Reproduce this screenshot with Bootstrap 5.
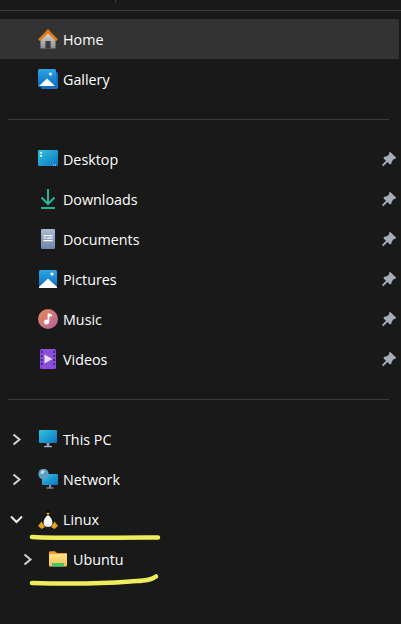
<!DOCTYPE html>
<html lang="en">
<head>
<meta charset="utf-8">
<title>Explorer sidebar</title>
<link href="https://cdn.jsdelivr.net/npm/bootstrap@5.3.0/dist/css/bootstrap.min.css" rel="stylesheet">
<style>
html,body{height:100%;margin:0;background:#191919;overflow:hidden}
body{font-family:"Open Sans","Noto Sans","Liberation Sans",sans-serif;font-size:14.3px;color:#fff;position:relative}
.top-strip{height:10px;position:relative}
.top-tick{position:absolute;left:115px;top:0;width:1px;height:3px;background:#3a3a3a}
.top-line{height:1px;background:#3d3d3d}
.tree-group{padding-top:8px}
.tree-row{height:40px;padding-left:38px;padding-right:12px;position:relative}
.tree-row.active-row{background:#333;margin-right:2px;padding-right:10px}
.tree-row.nested{padding-left:48px}
.tree-row svg.ico{width:20px;height:20px;flex:none;display:block}
.tree-row .lbl{margin-left:5px;line-height:1;padding-top:2px}
.chev{position:absolute;left:11px;top:14px;width:11px;height:13px}
.chev-open{left:10px;width:13px;top:15px;height:11px}
.nested .chev{left:22px}
.pin{width:16px;height:16px;margin-left:auto;flex:none;margin-right:-8px}
.sep{height:1px;background:#3a3a3a;margin:20px 12px 19px 8px}
.marker{position:absolute;left:0;top:0;pointer-events:none}
</style>
</head>
<body>
<svg width="0" height="0" class="d-block position-absolute">
<defs>
<linearGradient id="gBlue" x1="0" y1="0" x2="0" y2="1"><stop offset="0" stop-color="#2aa7e6"/><stop offset="1" stop-color="#0c6cc0"/></linearGradient>
<linearGradient id="gScreen" x1="0" y1="0" x2="1" y2="1"><stop offset="0" stop-color="#2fc7dc"/><stop offset="1" stop-color="#0f72c4"/></linearGradient>
<linearGradient id="gHome" x1="0" y1="0" x2="0" y2="1"><stop offset="0" stop-color="#d8d8d8"/><stop offset="1" stop-color="#8f8f8f"/></linearGradient>
<linearGradient id="gDoc" x1="0" y1="0" x2="0" y2="1"><stop offset="0" stop-color="#a9bcd6"/><stop offset="1" stop-color="#6f86a6"/></linearGradient>
<linearGradient id="gMusic" x1="0" y1="0" x2="1" y2="1"><stop offset="0" stop-color="#ec8a50"/><stop offset="1" stop-color="#b45fa6"/></linearGradient>
<linearGradient id="gFolder" x1="0" y1="0" x2="0" y2="1"><stop offset="0" stop-color="#ffe08a"/><stop offset="1" stop-color="#f6c04e"/></linearGradient>
<symbol id="chevR" viewBox="0 0 11 13"><path d="M2.5 1.5 8.5 6.5 2.5 11.5" fill="none" stroke="#d4d4d4" stroke-width="2"/></symbol>
<symbol id="chevD" viewBox="0 0 13 11"><path d="M1 2.5 6.5 8 12 2.5" fill="none" stroke="#efefef" stroke-width="2"/></symbol>
<symbol id="pinI" viewBox="0 0 16 16"><path d="M9 .8 15.2 6.8 13.6 8.2 12.6 8 10.6 11 10.4 12.8 9 13.6 6.4 11 2.4 15.2 1 14 5 9.8 2.4 7.2 3.2 5.8 5.2 5.6 8.2 3.6 7.8 2.4Z" fill="#a5adb7"/></symbol>
<symbol id="picI" viewBox="0 0 20 20"><rect x="1" y="1" width="18" height="18" rx="1.5" fill="url(#gBlue)"/><circle cx="14" cy="5" r="1.6" fill="#fff"/><path d="M1 18 10 9.5 19 18v1H1Z" fill="#fff"/></symbol>
</defs>
</svg>

<div class="top-strip"><div class="top-tick"></div></div>
<div class="top-line"></div>

<div class="tree-group">
  <div class="tree-row active-row d-flex align-items-center">
    <svg class="ico" viewBox="0 0 20 20"><path d="M2.5 10 10 3.5 17.500 10V19.500H2.500Z" fill="url(#gHome)"/><rect x="7.400" y="12" width="5.200" height="7.500" fill="#3a3a3a"/><path d="M0 10.500 10 0 20 10.500 18 12 10 4.500 2 12Z" fill="#e8780f"/></svg>
    <span class="lbl">Home</span>
  </div>
  <div class="tree-row d-flex align-items-center">
    <svg class="ico" viewBox="0 0 20 20"><rect x="3" y="3" width="17" height="17" rx="1.5" fill="#1a6fc0"/><rect x="0" y="0" width="18" height="18" rx="1.5" fill="url(#gBlue)"/><circle cx="12.500" cy="5" r="1.500" fill="#fff"/><path d="M1 17 9 9.500 17 17Z" fill="#fff"/></svg>
    <span class="lbl">Gallery</span>
  </div>
</div>
<div class="sep"></div>

<div>
  <div class="tree-row d-flex align-items-center">
    <svg class="ico" viewBox="0 0 20 20"><rect x="0" y="1" width="20" height="16" rx="1.2" fill="url(#gScreen)"/><rect x="2" y="3" width="2" height="1.6" fill="#fff"/><rect x="2" y="6" width="2" height="1.6" fill="#fff"/><rect x="15" y="15.500" width="1" height="1" fill="#d8f4ff"/><rect x="17" y="15.500" width="1" height="1" fill="#d8f4ff"/></svg>
    <span class="lbl">Desktop</span>
    <svg class="pin"><use href="#pinI"/></svg>
  </div>
  <div class="tree-row d-flex align-items-center">
    <svg class="ico" viewBox="0 0 20 20"><path d="M10 0V14.500M3.500 8.500 10 15 16.500 8.500" fill="none" stroke="#28b498" stroke-width="2"/><rect x="3" y="18" width="14" height="2" fill="#28b498"/></svg>
    <span class="lbl">Downloads</span>
    <svg class="pin"><use href="#pinI"/></svg>
  </div>
  <div class="tree-row d-flex align-items-center">
    <svg class="ico" viewBox="0 0 20 20"><rect x="3" y="0" width="14" height="20" rx="1.2" fill="url(#gDoc)"/><rect x="5.500" y="6" width="9" height="1.2" fill="#fff"/><rect x="9" y="8.500" width="5.500" height="1.2" fill="#fff"/><rect x="5.500" y="11" width="9" height="1.2" fill="#fff"/><rect x="5.500" y="8.200" width="2.500" height="1.500" fill="#e4ecf6"/></svg>
    <span class="lbl">Documents</span>
    <svg class="pin"><use href="#pinI"/></svg>
  </div>
  <div class="tree-row d-flex align-items-center">
    <svg class="ico"><use href="#picI"/></svg>
    <span class="lbl">Pictures</span>
    <svg class="pin"><use href="#pinI"/></svg>
  </div>
  <div class="tree-row d-flex align-items-center">
    <svg class="ico" viewBox="0 0 20 20"><circle cx="10" cy="10" r="10" fill="url(#gMusic)"/><path d="M10.500 4.500V12.500" stroke="#fff" stroke-width="1.800"/><circle cx="8.500" cy="13" r="2.500" fill="#fff"/><path d="M10.500 4.500 14 5.500V7.800L10.500 6.800Z" fill="#fff"/></svg>
    <span class="lbl">Music</span>
    <svg class="pin"><use href="#pinI"/></svg>
  </div>
  <div class="tree-row d-flex align-items-center">
    <svg class="ico" viewBox="0 0 20 20"><rect x="2" y="0" width="16" height="20" rx="1.500" fill="#8a4fd8"/><path d="M3 2h1.600v2H3zM3 6h1.600v2H3zM3 10h1.600v2H3zM3 14h1.600v2H3zM15.400 2H17v2h-1.600zM15.400 6H17v2h-1.600zM15.400 10H17v2h-1.600zM15.400 14H17v2h-1.600z" fill="#3f2080"/><path d="M6.500 5.500 14.500 10 6.500 14.500Z" fill="#e9dcff"/></svg>
    <span class="lbl">Videos</span>
    <svg class="pin"><use href="#pinI"/></svg>
  </div>
</div>
<div class="sep"></div>

<div>
  <div class="tree-row d-flex align-items-center">
    <svg class="chev"><use href="#chevR"/></svg>
    <svg class="ico" viewBox="0 0 20 20"><rect x="1" y="1" width="18" height="13" rx="1" fill="url(#gScreen)"/><rect x="8.500" y="14" width="3" height="3" fill="#8a9aa8"/><rect x="6" y="17" width="8" height="1.200" fill="#aab6c0"/></svg>
    <span class="lbl">This PC</span>
  </div>
  <div class="tree-row d-flex align-items-center">
    <svg class="chev"><use href="#chevR"/></svg>
    <svg class="ico" viewBox="0 0 20 20"><rect x="4" y="5" width="16" height="11" rx="1" fill="url(#gScreen)"/><rect x="11" y="16" width="2" height="2.500" fill="#8a9aa8"/><rect x="8.500" y="18.500" width="7" height="1" fill="#aab6c0"/><circle cx="5.500" cy="5" r="5.200" fill="#5c9fc4"/><path d="M2.500 3c1.500-1.500 3-1.800 4.500-1.200L5.500 4.500 3 5Z" fill="#c4e2f2"/></svg>
    <span class="lbl">Network</span>
  </div>
  <div class="tree-row d-flex align-items-center">
    <svg class="chev chev-open"><use href="#chevD"/></svg>
    <svg class="ico" viewBox="0 0 20 20"><path d="M10 0C7.600 0 7 2.400 7 4.500 7 7 3 10 3 14 3 17 6 19 10 19S17 17 17 14C17 10 13 7 13 4.500 13 2.400 12.400 0 10 0Z" fill="#0c0c0c" stroke="#333" stroke-width=".5"/><path d="M10 6C7.500 7.500 5.500 10.500 5.500 13.500 5.500 16.500 7.500 18 10 18S14.500 16.500 14.500 13.500C14.500 10.500 12.500 7.500 10 6Z" fill="#f6f6f6"/><path d="M8 4.400 10 3.500 12 4.400 10 6Z" fill="#e8a317"/><path d="M0 17 3.500 12.500 7 18 3.500 20Z M20 17 16.500 12.500 13 18 16.500 20Z" fill="#e0a020"/></svg>
    <span class="lbl">Linux</span>
  </div>
  <div class="tree-row nested d-flex align-items-center">
    <svg class="chev"><use href="#chevR"/></svg>
    <svg class="ico" viewBox="0 0 20 20"><path d="M1 3.500C1 2.800 1.500 2.200 2.200 2.200H7L9 4H19V8H1Z" fill="#e9a21e"/><rect x="1" y="5" width="18" height="12.500" rx="1" fill="url(#gFolder)"/><rect x="4" y="14" width="12" height="3.500" fill="#3fc76a"/></svg>
    <span class="lbl">Ubuntu</span>
  </div>
</div>

<svg class="marker" width="401" height="624" viewBox="0 0 401 624">
  <path d="M32 537C60 538.500 120 537.800 158 537.500" fill="none" stroke="#eeee5c" stroke-width="4.500" stroke-linecap="round"/>
  <path d="M32 583C70 584 110 583 130 581.500 142 580.500 150 581 156 576.500" fill="none" stroke="#eeee5c" stroke-width="4.500" stroke-linecap="round"/>
</svg>
</body>
</html>
